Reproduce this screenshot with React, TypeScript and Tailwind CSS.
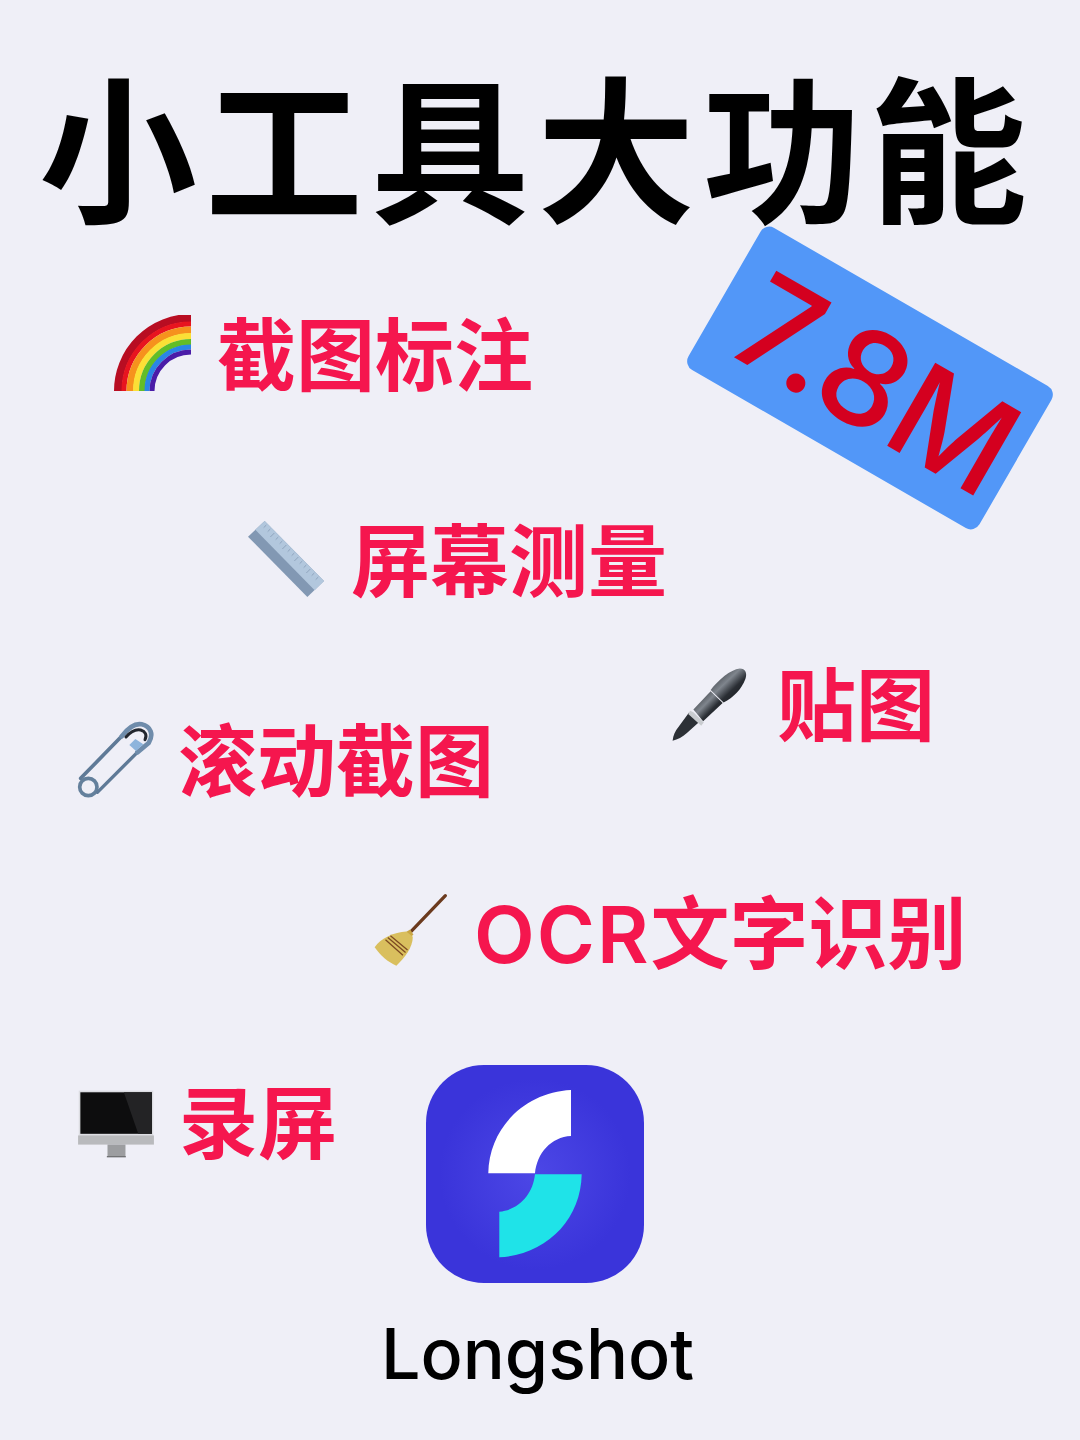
function Rainbow() {
  const bands = [
    { r: 73, c: '#b80d22', w: 8 },
    { r: 67, c: '#e8141f', w: 5 },
    { r: 61, c: '#f6921d', w: 7 },
    { r: 55, c: '#fbe036', w: 6 },
    { r: 49, c: '#63bd27', w: 6 },
    { r: 44, c: '#2a86e6', w: 5 },
    { r: 39, c: '#4a1ca8', w: 5 },
  ];
  return (
    <svg width="78" height="76" viewBox="0 0 78 76">
      {bands.map((b) => (
        <path
          key={b.r}
          d={`M${78 - b.r} 76A${b.r} ${b.r} 0 0 1 78 ${76 - b.r}`}
          fill="none"
          stroke={b.c}
          strokeWidth={b.w}
        />
      ))}
    </svg>
  );
}

function Ruler() {
  return (
    <svg width="78" height="78" viewBox="0 0 234 234">
      <polygon points="50,0 228,180 178,228 0,47" fill="#8298b3" />
      <polygon points="50,0 228,180 200,208 22,26" fill="#b2c7dd" />
      <g stroke="#7d93ad" strokeWidth="2">
        <path d="M55 12L47 20M67 24L59 32M79 36L67 48M91 48L83 56M103 60L95 68M115 72L103 84M127 84L119 92M139 96L131 104M151 108L139 120M163 120L155 128M175 132L167 140M187 144L175 156M199 156L191 164M211 168L203 176" />
      </g>
    </svg>
  );
}

function Pen() {
  return (
    <svg width="78" height="78" viewBox="30 35 240 240">
      <defs>
        <linearGradient id="penBody" x1="0" y1="0" x2="1" y2="1">
          <stop offset="0" stopColor="#1b1e23" />
          <stop offset="0.42" stopColor="#7f858d" />
          <stop offset="0.62" stopColor="#2a2e34" />
          <stop offset="1" stopColor="#101215" />
        </linearGradient>
      </defs>
      <path d="M38 268C40 252 46 238 56 226L88 182L118 212L82 244C68 256 54 264 38 268Z" fill="#2c3036" />
      <path d="M92 176L102 180L134 212L126 222L86 186Z" fill="#c9ccd0" />
      <path d="M102 172L155 116L192 152L132 208Z" fill="url(#penBody)" />
      <path d="M155 112C180 80 215 50 245 46C262 46 268 60 262 78C250 110 225 135 195 150Z" fill="url(#penBody)" />
    </svg>
  );
}

function SafetyPin() {
  return (
    <svg width="78" height="78" viewBox="48 210 234 234">
      <g fill="none" strokeLinecap="round">
        <circle cx="85" cy="408" r="26" stroke="#64809c" strokeWidth="11" />
        <path d="M62 382L185 256" stroke="#5f7a97" strokeWidth="11" />
        <path d="M112 424L232 304" stroke="#5f7a97" strokeWidth="10" />
        <path d="M185 256C205 230 225 216 245 220C272 226 282 250 266 276L232 304" stroke="#6f8cab" strokeWidth="14" />
        <path d="M198 258C212 242 228 234 242 237C256 241 262 252 255 266" stroke="#22262e" strokeWidth="9" />
      </g>
      <polygon points="208,282 226,264 250,280 228,300" fill="#8db4dc" />
    </svg>
  );
}

function Broom() {
  return (
    <svg width="75" height="75" viewBox="35 35 228 228">
      <path d="M255 43L148 155" stroke="#6b3a1e" strokeWidth="10" strokeLinecap="round" />
      <path d="M134 154L148 146L158 162L144 172Z" fill="#c9a644" />
      <path d="M136 152L156 168C156 200 132 232 106 256C82 246 58 226 40 200C58 172 100 154 136 152Z" fill="#d9bf5e" />
      <path d="M80 170L134 216M73 177L126 224M88 165L140 208" stroke="#7d4a22" strokeWidth="4" fill="none" />
    </svg>
  );
}

function Imac() {
  return (
    <svg width="80" height="68" viewBox="46 56 236 208" className="mt-[7px]">
      <rect x="50" y="58" width="228" height="140" fill="#dcdde2" />
      <rect x="55" y="63" width="219" height="127" fill="#0d0d0e" />
      <polygon points="188,63 274,63 274,190 232,190" fill="#232325" />
      <rect x="48" y="195" width="232" height="28" fill="#b9babd" />
      <rect x="138" y="223" width="55" height="36" fill="#9c9da0" />
      <rect x="136" y="258" width="58" height="4" fill="#6d6e70" />
    </svg>
  );
}

function Feature({ icon, label, gap }: { icon: React.ReactNode; label: React.ReactNode; gap: string }) {
  return (
    <div className={`flex items-start ${gap}`}>
      {icon}
      <span className="mt-[2px] text-[79px] leading-none font-semibold text-[#f5164e] whitespace-nowrap">{label}</span>
    </div>
  );
}

function LongshotLogo() {
  return (
    <div className="w-[218px] h-[218px] rounded-[58px] bg-[radial-gradient(circle,#4c47e6_0%,#3a34da_62%)]">
      <svg width="218" height="218" viewBox="0 0 218 218">
        <path d="M145 25V71C125 72 111 88 109 108.3H62.3C63 62 100 27 145 25Z" fill="#fff" />
        <path d="M155.7 109.3H109C107 129 93 145 73.3 146.7V192.3C120 190 155 155 155.7 109.3Z" fill="#1fe3e8" />
      </svg>
    </div>
  );
}

export default function App() {
  return (
    <div className='relative w-[1080px] h-[1440px] overflow-hidden bg-[#efeff7] text-black flex flex-col pt-[59px] font-["Inter","Noto_Sans_CJK_SC",sans-serif]'>
      <h1 className="h-[190px] pr-[6px] text-center text-[158px] leading-[190px] tracking-[8px] font-bold whitespace-nowrap">小工具大功能</h1>

      {/* tilted badge sits over the page */}
      <div className="absolute left-[702px] top-[296px] w-[336px] h-[164px] rotate-30 rounded-[10px] bg-[#5297f8] flex items-center justify-center">
        <span className="pl-[18px] pt-[4px] text-[132px] leading-none font-medium text-[#d4001f]">7.8M</span>
      </div>

      <div className="mt-[66px] pl-[113px]">
        <Feature icon={<Rainbow />} label="截图标注" gap="gap-[26px]" />
      </div>
      <div className="mt-[125px] pl-[248px]">
        <Feature icon={<Ruler />} label="屏幕测量" gap="gap-[25px]" />
      </div>
      <div className="mt-[63px] pl-[76px] flex items-start gap-[176px]">
        <div className="mt-[56px]">
          <Feature icon={<SafetyPin />} label="滚动截图" gap="gap-[24px]" />
        </div>
        <Feature icon={<Pen />} label="贴图" gap="gap-[29px]" />
      </div>
      <div className="mt-[91px] pl-[373px]">
        <Feature icon={<Broom />} label={<><span className="tracking-[2px]">OCR</span>文字识别</>} gap="gap-[26px]" />
      </div>
      <div className="mt-[91px] pl-[76px] flex items-start gap-[89px]">
        <div className="mt-[18px]">
          <Feature icon={<Imac />} label="录屏" gap="gap-[23px]" />
        </div>
        <div className="w-[218px] flex flex-col items-center gap-[29px]">
          <LongshotLogo />
          <p className="pl-[5px] text-[70px] leading-[84px] font-medium whitespace-nowrap">Longshot</p>
        </div>
      </div>
    </div>
  );
}
